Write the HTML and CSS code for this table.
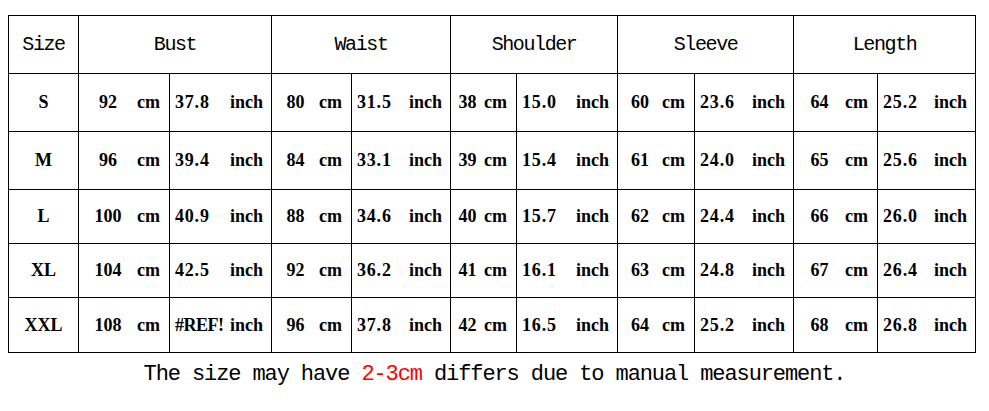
FILE: index.html
```html
<!DOCTYPE html>
<html lang="en">
<head>
    <meta charset="UTF-8">
    <meta name="viewport" content="width=device-width, initial-scale=1.0">
    <title>Size Chart</title>
    <link rel="stylesheet" href="styles.css">
</head>
<body>

    <div class="chart">
        <table class="size-table">
            <colgroup>
                <col class="c-size">
                <col class="c-bust-cm"><col class="c-bust-in">
                <col class="c-waist-cm"><col class="c-waist-in">
                <col class="c-shoulder-cm"><col class="c-shoulder-in">
                <col class="c-sleeve-cm"><col class="c-sleeve-in">
                <col class="c-length-cm"><col class="c-length-in">
            </colgroup>
            <tr class="head-row">
                <th>Size</th>
                <th colspan="2">Bust</th>
                <th colspan="2">Waist</th>
                <th colspan="2">Shoulder</th>
                <th colspan="2">Sleeve</th>
                <th colspan="2">Length</th>
            </tr>
            <tr class="row-s">
                <td class="size">S</td>
                <td><div class="cm"><span class="val">92</span><span class="unit">cm</span></div></td>
                <td><div class="in"><span class="num">37.8</span><span>inch</span></div></td>
                <td><div class="cm"><span class="val">80</span><span class="unit">cm</span></div></td>
                <td><div class="in"><span class="num">31.5</span><span>inch</span></div></td>
                <td><div class="cm"><span class="val">38</span><span class="unit">cm</span></div></td>
                <td><div class="in"><span class="num">15.0</span><span>inch</span></div></td>
                <td><div class="cm"><span class="val">60</span><span class="unit">cm</span></div></td>
                <td><div class="in"><span class="num">23.6</span><span>inch</span></div></td>
                <td><div class="cm"><span class="val">64</span><span class="unit">cm</span></div></td>
                <td><div class="in"><span class="num">25.2</span><span>inch</span></div></td>
            </tr>
            <tr class="row-m">
                <td class="size">M</td>
                <td><div class="cm"><span class="val">96</span><span class="unit">cm</span></div></td>
                <td><div class="in"><span class="num">39.4</span><span>inch</span></div></td>
                <td><div class="cm"><span class="val">84</span><span class="unit">cm</span></div></td>
                <td><div class="in"><span class="num">33.1</span><span>inch</span></div></td>
                <td><div class="cm"><span class="val">39</span><span class="unit">cm</span></div></td>
                <td><div class="in"><span class="num">15.4</span><span>inch</span></div></td>
                <td><div class="cm"><span class="val">61</span><span class="unit">cm</span></div></td>
                <td><div class="in"><span class="num">24.0</span><span>inch</span></div></td>
                <td><div class="cm"><span class="val">65</span><span class="unit">cm</span></div></td>
                <td><div class="in"><span class="num">25.6</span><span>inch</span></div></td>
            </tr>
            <tr class="row-l">
                <td class="size">L</td>
                <td><div class="cm"><span class="val">100</span><span class="unit">cm</span></div></td>
                <td><div class="in"><span class="num">40.9</span><span>inch</span></div></td>
                <td><div class="cm"><span class="val">88</span><span class="unit">cm</span></div></td>
                <td><div class="in"><span class="num">34.6</span><span>inch</span></div></td>
                <td><div class="cm"><span class="val">40</span><span class="unit">cm</span></div></td>
                <td><div class="in"><span class="num">15.7</span><span>inch</span></div></td>
                <td><div class="cm"><span class="val">62</span><span class="unit">cm</span></div></td>
                <td><div class="in"><span class="num">24.4</span><span>inch</span></div></td>
                <td><div class="cm"><span class="val">66</span><span class="unit">cm</span></div></td>
                <td><div class="in"><span class="num">26.0</span><span>inch</span></div></td>
            </tr>
            <tr class="row-xl">
                <td class="size">XL</td>
                <td><div class="cm"><span class="val">104</span><span class="unit">cm</span></div></td>
                <td><div class="in"><span class="num">42.5</span><span>inch</span></div></td>
                <td><div class="cm"><span class="val">92</span><span class="unit">cm</span></div></td>
                <td><div class="in"><span class="num">36.2</span><span>inch</span></div></td>
                <td><div class="cm"><span class="val">41</span><span class="unit">cm</span></div></td>
                <td><div class="in"><span class="num">16.1</span><span>inch</span></div></td>
                <td><div class="cm"><span class="val">63</span><span class="unit">cm</span></div></td>
                <td><div class="in"><span class="num">24.8</span><span>inch</span></div></td>
                <td><div class="cm"><span class="val">67</span><span class="unit">cm</span></div></td>
                <td><div class="in"><span class="num">26.4</span><span>inch</span></div></td>
            </tr>
            <tr class="row-xxl">
                <td class="size">XXL</td>
                <td><div class="cm"><span class="val">108</span><span class="unit">cm</span></div></td>
                <td><div class="in"><span class="err">#REF!</span><span>inch</span></div></td>
                <td><div class="cm"><span class="val">96</span><span class="unit">cm</span></div></td>
                <td><div class="in"><span class="num">37.8</span><span>inch</span></div></td>
                <td><div class="cm"><span class="val">42</span><span class="unit">cm</span></div></td>
                <td><div class="in"><span class="num">16.5</span><span>inch</span></div></td>
                <td><div class="cm"><span class="val">64</span><span class="unit">cm</span></div></td>
                <td><div class="in"><span class="num">25.2</span><span>inch</span></div></td>
                <td><div class="cm"><span class="val">68</span><span class="unit">cm</span></div></td>
                <td><div class="in"><span class="num">26.8</span><span>inch</span></div></td>
            </tr>
        </table>

        <p class="note">The size may have <span class="hl">2-3cm</span> differs due to manual measurement.</p>
    </div>

</body>
</html>
```

FILE: styles.css
```css
body {
    margin: 0;
    background: #fff;
    color: #000;
}
.chart {
    padding: 15px 0 0 8px;
}
.size-table {
    border-collapse: collapse;
    table-layout: fixed;
    width: 968px;
}
.size-table th,
.size-table td {
    border: 1px solid #000;
    padding: 0;
    vertical-align: middle;
}

/* column widths, taken line to line */
.c-size { width: 70px; }
.c-bust-cm { width: 91px; }
.c-bust-in { width: 102px; }
.c-waist-cm { width: 80px; }
.c-waist-in { width: 99px; }
.c-shoulder-cm { width: 66px; }
.c-shoulder-in { width: 101px; }
.c-sleeve-cm { width: 77px; }
.c-sleeve-in { width: 99px; }
.c-length-cm { width: 84px; }
.c-length-in { width: 98px; }

.head-row { height: 58px; }
.row-s { height: 58px; }
.row-m { height: 58px; }
.row-l { height: 54px; }
.row-xl { height: 54px; }
.row-xxl { height: 55px; }

.size-table th {
    font-family: "Liberation Mono", monospace;
    font-size: 20px;
    letter-spacing: -1.4px;
    font-weight: normal;
    text-align: center;
}
.size-table td {
    font-family: "Liberation Serif", serif;
    font-size: 18px;
    font-weight: bold;
}
.size {
    text-align: center;
}
.cm {
    display: flex;
    align-items: center;
    padding-right: 9px;
}
.cm .val {
    flex: 1;
    text-align: center;
}
.in {
    display: flex;
    justify-content: space-between;
    align-items: center;
    padding: 0 8px 0 5px;
}
.num {
    letter-spacing: 0.8px;
}
.err {
    letter-spacing: -0.5px;
}

.note {
    margin: 9px 0 0 -8px;
    font-family: "Liberation Mono", monospace;
    font-size: 22px;
    letter-spacing: -1.1px;
    text-align: center;
}
.hl {
    color: #f00;
}
```
